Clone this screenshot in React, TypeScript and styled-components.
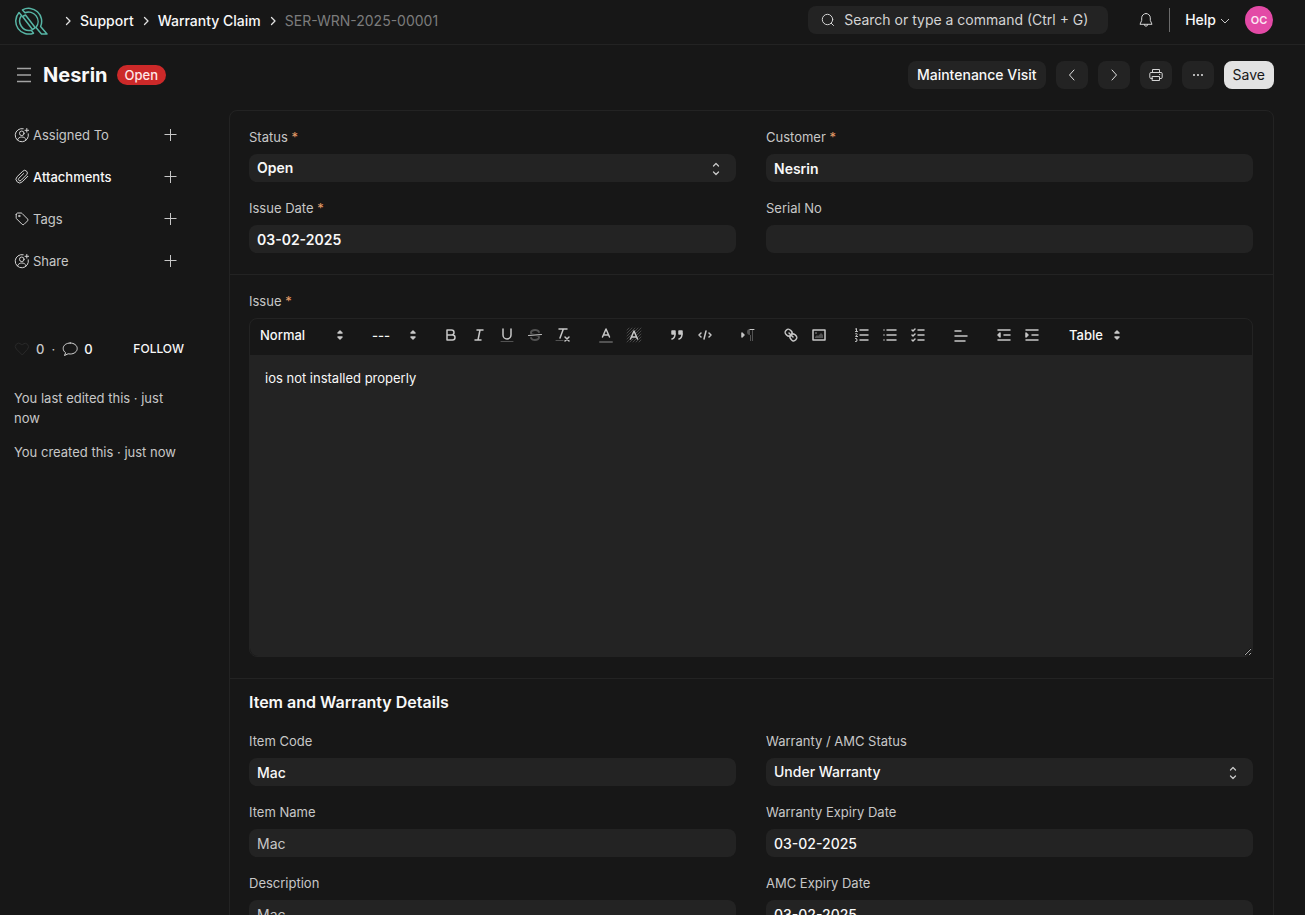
import React from "react";
import styled, { createGlobalStyle } from "styled-components";

const GlobalStyle = createGlobalStyle`
  *, *::before, *::after { box-sizing: border-box; }
  html { color-scheme: dark; }
  body {
    margin: 0;
    background: #171717;
    color: #f8f8f8;
    font-family: Inter, "Liberation Sans", sans-serif;
    font-size: 13px;
    line-height: 20px;
  }
  button, input, select, textarea { font: inherit; color: inherit; margin: 0; }
  a { color: inherit; text-decoration: none; }
  svg { display: block; flex: none; }
`;

const Page = styled.div`
  height: 100vh;
  overflow: hidden;
`;

const Navbar = styled.header`
  display: flex;
  align-items: center;
  justify-content: space-between;
  height: 45px;
  padding: 0 32px 4px 14px;
  border-bottom: 1px solid #232323;
`;

const Breadcrumbs = styled.nav`
  display: flex;
  align-items: center;
  gap: 7px;
  padding-top: 2px;
  font-size: 14px;
  font-weight: 500;
`;

const Crumb = styled.a<{ $muted?: boolean }>`
  color: ${(p) => (p.$muted ? "#7c7c7c" : "#f8f8f8")};
  font-weight: ${(p) => (p.$muted ? 400 : 500)};
`;

const LogoLink = styled.a`
  display: block;
  margin-right: 8px;
`;

const NavTools = styled.div`
  display: flex;
  align-items: center;
`;

const SearchBox = styled.label`
  display: flex;
  align-items: center;
  gap: 8px;
  width: 300px;
  height: 28px;
  padding: 0 12px;
  border-radius: 8px;
  background: #232323;
`;

const SearchInput = styled.input`
  flex: 1;
  min-width: 0;
  padding: 0;
  border: 0;
  outline: 0;
  background: none;
  font-size: 14px;
  &::placeholder { color: #d4d4d4; opacity: 1; }
`;

const BareButton = styled.button`
  display: flex;
  align-items: center;
  padding: 0;
  border: 0;
  background: none;
  cursor: pointer;
`;

const BellButton = styled(BareButton)`
  margin: 0 15px 0 30px;
`;

const NavDivider = styled.span`
  width: 1px;
  height: 24px;
  background: #6b6b6b;
`;

const HelpButton = styled(BareButton)`
  gap: 3px;
  margin: 0 14px 0 15px;
  font-size: 14px;
  font-weight: 500;
`;

const Avatar = styled(BareButton)`
  justify-content: center;
  width: 28px;
  height: 28px;
  border-radius: 50%;
  background: #e34aa6;
  color: #fce7f3;
  font-size: 11px;
  font-weight: 600;
`;

const PageHead = styled.div`
  display: flex;
  align-items: center;
  justify-content: space-between;
  height: 60px;
  padding: 0 31px 0 14px;
`;

const TitleArea = styled.div`
  display: flex;
  align-items: center;
`;

const Title = styled.h1`
  margin: 0 9px;
  font-size: 20px;
  font-weight: 700;
  line-height: 28px;
`;

const Pill = styled.span`
  padding: 0 8px;
  border-radius: 10px;
  background: #cc2929;
  color: #ffe7e7;
  font-weight: 500;
`;

const Actions = styled.div`
  display: flex;
  gap: 10px;
`;

const ActionButton = styled.button<{ $kind?: "icon" | "primary" }>`
  display: flex;
  align-items: center;
  justify-content: center;
  height: 28px;
  width: ${(p) => (p.$kind === "icon" ? "32px" : "auto")};
  padding: 0 ${(p) => (p.$kind === "icon" ? 0 : 9)}px;
  border: 0;
  border-radius: 8px;
  background: ${(p) => (p.$kind === "primary" ? "#e2e2e2" : "#232323")};
  color: ${(p) => (p.$kind === "primary" ? "#171717" : "#f8f8f8")};
  font-size: 14px;
  font-weight: ${(p) => (p.$kind === "primary" ? 400 : 500)};
  cursor: pointer;
`;

const Body = styled.div`
  display: flex;
  align-items: flex-start;
  gap: 45px;
  padding: 5px 31px 0 14px;
`;

const Sidebar = styled.aside`
  flex: none;
  width: 170px;
  padding-top: 15px;
  color: #c7c7c7;
`;

const SideList = styled.ul`
  display: flex;
  flex-direction: column;
  gap: 22px;
  margin: 0 0 68px;
  padding: 0;
  list-style: none;
`;

const SideItem = styled.li<{ $active?: boolean }>`
  display: flex;
  align-items: center;
  gap: 3px;
  color: ${(p) => (p.$active ? "#f8f8f8" : "#c7c7c7")};
  font-weight: ${(p) => (p.$active ? 500 : 400)};
`;

const AddButton = styled(BareButton)`
  margin: 0 6px 0 auto;
`;

const Stats = styled.div`
  display: flex;
  align-items: center;
  gap: 7px;
  margin-bottom: 29px;
`;

const Stat = styled(BareButton)<{ $active?: boolean }>`
  gap: 6px;
  color: ${(p) => (p.$active ? "#f8f8f8" : "#c7c7c7")};
  font-weight: 500;
`;

const FollowButton = styled(BareButton)`
  margin-left: auto;
  font-size: 12px;
  font-weight: 500;
  color: #f8f8f8;
`;

const Note = styled.p`
  margin: 0 0 14px;
`;

const Card = styled.main`
  flex: 1;
  min-width: 0;
  border: 1px solid #232323;
  border-radius: 8px;
`;

const Section = styled.section`
  padding: 16px 20px 21px 19px;
  & + & { border-top: 1px solid #232323; }
`;

const SectionTitle = styled.h2`
  margin: -5px 0 17px;
  font-size: 16px;
  font-weight: 600;
  line-height: 24px;
`;

const FieldGrid = styled.div`
  display: grid;
  grid-template-columns: 1fr 1fr;
  gap: 16px 30px;
`;

const FieldBox = styled.div`
  display: flex;
  flex-direction: column;
  gap: 7px;
`;

const FieldLabel = styled.label`
  color: #c7c7c7;
`;

const Star = styled.span`
  color: #e79b67;
`;

const controlWeight = { bold: 600, medium: 500, normal: 400 };

const Control = styled.input<{ $tone: keyof typeof controlWeight }>`
  width: 100%;
  height: 28px;
  padding: 0 8px;
  border: 0;
  border-radius: 8px;
  outline: 0;
  appearance: none;
  background: #232323;
  color: ${(p) => (p.$tone === "normal" ? "#c7c7c7" : "#f8f8f8")};
  font-size: 14px;
  font-weight: ${(p) => controlWeight[p.$tone]};
`;

const SelectWrap = styled.div`
  position: relative;
`;

const SelectMark = styled.svg`
  position: absolute;
  top: 8px;
  right: 16px;
  pointer-events: none;
`;

const Editor = styled.div`
  margin-top: 7px;
  border: 1px solid #232323;
  border-radius: 8px;
`;

const Toolbar = styled.div`
  display: flex;
  align-items: center;
  gap: 15px;
  height: 36px;
  padding: 0 0 4px 2px;
  overflow: hidden;
`;

const ToolGroup = styled.div`
  display: flex;
`;

const Tool = styled(BareButton)`
  justify-content: center;
  width: 28px;
  height: 24px;
`;

const Picker = styled.div<{ $w: number }>`
  position: relative;
  width: ${(p) => p.$w}px;
`;

const PickerSelect = styled.select`
  width: 100%;
  height: 24px;
  padding: 0 0 0 8px;
  border: 0;
  outline: 0;
  appearance: none;
  background: none;
  font-weight: 500;
`;

const PickerMark = styled.svg`
  position: absolute;
  top: 3px;
  right: 0;
  pointer-events: none;
`;

const EditorText = styled.textarea`
  display: block;
  width: 100%;
  height: 301px;
  padding: 13px 15px;
  border: 0;
  border-radius: 0 0 8px 8px;
  outline: 0;
  resize: vertical;
  background: #232323;
`;

const CrumbArrow = () => (
  <svg width="10" height="12" viewBox="0 0 10 12" fill="none" stroke="#e2e2e2" strokeWidth="1.3">
    <path d="M3.5 2.5 7 6 3.5 9.5" strokeLinecap="round" strokeLinejoin="round" />
  </svg>
);

const Logo = () => (
  <svg width="34" height="28" viewBox="0 0 34 28" fill="none" stroke="#57b5a5" strokeWidth="1.5" strokeLinejoin="round">
    <path d="M5 5.500A13 13 0 0 0 19.500 26.200L17.300 23.300A9.500 9.500 0 0 1 7.500 8.500Z" />
    <path d="M8.500 2.900A13 13 0 0 1 26.600 19.500L33 27H27.500L22 20.500A9.500 9.500 0 0 0 11 5.800Z" />
    <path d="M8.500 9.500 18.500 22.500 21.300 20.700 11.500 8Z" />
  </svg>
);

const StrokeIcon = ({ size = 16, color = "#d4d4d4", children }: { size?: number; color?: string; children: React.ReactNode }) => (
  <svg width={size} height={size} viewBox="0 0 16 16" fill="none" stroke={color} strokeLinecap="round" strokeLinejoin="round">
    {children}
  </svg>
);

const AssignIcon = () => (
  <StrokeIcon>
    <path d="M9.200 1.700A6.600 6.600 0 1 0 14.300 6.800" />
    <circle cx="7.800" cy="6.300" r="2.300" />
    <path d="M3.500 12.800c.6-1.900 2.300-2.800 4.300-2.800s3.700.9 4.300 2.800M12.800 1.500v3.600M11 3.300h3.600" />
  </StrokeIcon>
);

const ClipIcon = () => (
  <StrokeIcon>
    <path d="M13.800 7.300 8.300 12.800a3.600 3.600 0 0 1-5.200-5.100l5.700-5.500a2.600 2.600 0 0 1 3.800 3.600L7 11.400a1.500 1.500 0 0 1-2.200-2.100l4.800-4.700" />
  </StrokeIcon>
);

const TagIcon = () => (
  <StrokeIcon>
    <path d="M2.200 3.600v3.200c0 .4.1.7.4 1l5.600 5.600c.5.500 1.300.5 1.800 0l3.600-3.600c.5-.5.5-1.300 0-1.800L8 2.400c-.3-.3-.6-.4-1-.4H3.800c-.9 0-1.600.7-1.600 1.600Z" />
    <circle cx="5.200" cy="5" r=".7" />
  </StrokeIcon>
);

const PlusIcon = () => (
  <StrokeIcon color="#c7c7c7">
    <path d="M8.500 2v12M2.500 7.500h12" strokeLinecap="butt" />
  </StrokeIcon>
);

const sideItems = [
  { label: "Assigned To", icon: <AssignIcon /> },
  { label: "Attachments", icon: <ClipIcon />, active: true },
  { label: "Tags", icon: <TagIcon /> },
  { label: "Share", icon: <AssignIcon /> },
];

const UpDown = () => (
  <SelectMark width="8" height="14" viewBox="0 0 8 14" fill="none" stroke="#c7c7c7" strokeWidth="1.3" strokeLinecap="round" strokeLinejoin="round">
    <path d="M1.500 4 4 1.500 6.500 4M1.500 10 4 12.500 6.500 10" />
  </SelectMark>
);

type FieldProps = { id: string; label: string; value?: string; required?: boolean; select?: boolean; tone?: "bold" | "medium" | "normal" };

const Field = ({ id, label, value = "", required, select, tone = "medium" }: FieldProps) => (
  <FieldBox>
    <FieldLabel htmlFor={id}>
      {label}
      {required && <Star> *</Star>}
    </FieldLabel>
    {select ? (
      <SelectWrap>
        <Control as="select" id={id} $tone={tone} defaultValue={value}>
          <option>{value}</option>
        </Control>
        <UpDown />
      </SelectWrap>
    ) : (
      <Control id={id} $tone={tone} defaultValue={value} readOnly={tone === "normal"} />
    )}
  </FieldBox>
);

const ToolPicker = ({ label, text, width }: { label: string; text: string; width: number }) => (
  <Picker $w={width}>
    <PickerSelect aria-label={label} defaultValue={text}>
      <option>{text}</option>
    </PickerSelect>
    <PickerMark width="18" height="18" viewBox="0 0 18 18" fill="#c7c7c7" stroke="#c7c7c7" strokeWidth="1.5" strokeLinejoin="round">
      <path d="M7 11 9 13 11 11ZM7 7 9 5 11 7Z" />
    </PickerMark>
  </Picker>
);

const DIM = "#525252";

const toolGroups: { name: string; art: React.ReactNode }[][] = [
  [
    { name: "Bold", art: <path d="M5 4H9.500A2.500 2.500 0 0 1 9.500 9H5ZM5 9H10.500A2.500 2.500 0 0 1 10.500 14H5Z" /> },
    { name: "Italic", art: <path d="M7 4H13M5 14H11M8 14 10 4" /> },
    { name: "Underline", art: <><path d="M5 3V9a4 4 0 0 0 8 0V3" /><path d="M3 15.500H15" stroke={DIM} strokeWidth="1" /></> },
    {
      name: "Strike",
      art: (
        <>
          <path fill={DIM} stroke="none" d="M9.007,8C6.542,7.791,6,7.519,6,6.500,6,5.792,7.283,5,9,5c1.571,0,2.765.679,2.969,1.309a1,1,0,0,0,1.900-.617C13.356,4.106,11.354,3,9,3,6.200,3,4,4.538,4,6.500a3.200,3.200,0,0,0,.5,1.843Z" />
          <path fill={DIM} stroke="none" d="M8.984,10C11.457,10.208,12,10.479,12,11.500c0,0.708-1.283,1.500-3,1.500-1.571,0-2.765-.679-2.969-1.309a1,1,0,1,0-1.900.617C4.644,13.894,6.646,15,9,15c2.800,0,5-1.538,5-3.500a3.200,3.200,0,0,0-.5-1.843Z" />
          <path d="M15.500 8.500 2.500 9.500" strokeWidth="1" />
        </>
      ),
    },
    { name: "Clear formatting", art: <><path d="M5 3H13M6 12 9.350 3M11 11 15 15M15 11 11 15" /><path d="M2 14.500H9" stroke={DIM} strokeWidth="1" /></> },
  ],
  [
    { name: "Text colour", art: <><path d="M3 16H15" stroke={DIM} strokeWidth="2" /><path d="M5.500 11 9 3 12.500 11M11.600 9H6.400" /></> },
    {
      name: "Highlight",
      art: (
        <>
          <path d="M2 4 4 2M2 7 7 2M2 10 10 2M2 13 5.500 9.500M8 7 13 2M2 16 6 12M11 7 16 2M5 16 8 13M12 9 16 5M8 16 16 8M11 16 16 11M14 16 16 14" stroke={DIM} strokeWidth="0.8" />
          <path d="M5.500 13 9 5 12.500 13M11.600 11H6.400" />
        </>
      ),
    },
  ],
  [
    { name: "Quote", art: <><path fill="#c7c7c7" d="M4 5h3v3H4ZM11 5h3v3h-3Z" /><path d="M7 8c0 4-3 5-3 5M14 8c0 4-3 5-3 5" /></> },
    { name: "Code", art: <path d="M5 7 3 9 5 11M13 7 15 9 13 11M10 5 8 13" /> },
  ],
  [
    {
      name: "Text direction",
      art: (
        <>
          <path d="M11 3a3 3 0 0 0 0 6h1V3ZM11 4h1v11h-1ZM13 4h1v11h-1Z" fill={DIM} stroke="none" />
          <path d="M11 3.500H15" strokeWidth="1" />
          <path d="M3 11 5 9 3 7Z" fill="#c7c7c7" />
        </>
      ),
    },
  ],
  [
    {
      name: "Link",
      art: (
        <path d="M7 7 11 11M8.900,4.577a3.476,3.476,0,0,1,.36,4.679A3.476,3.476,0,0,1,4.577,8.900C3.185,7.500,2.035,6.400,4.217,4.217S7.500,3.185,8.900,4.577ZM13.423,9.100a3.476,3.476,0,0,0-4.679-.36,3.476,3.476,0,0,0,.36,4.679c1.392,1.392,2.500,2.542,4.679.36S14.815,10.500,13.423,9.100Z" />
      ),
    },
    { name: "Image", art: <><path d="M3 4H15V14H3Z" /><path fill={DIM} stroke="none" d="M5 6h2v2H5ZM5 12v-1l2-2 1 1 3-3 2 2v3Z" /></> },
  ],
  [
    {
      name: "Numbered list",
      art: (
        <>
          <path d="M7 4H15M7 9H15M7 14H15" />
          <path strokeWidth="1" d="M2.500 5.500h2M3.500 5.500v-3l-1 .5M2.500 7.700c1-.6 2 0 1.600.8L2.600 10.500h2M2.500 12.500c2-.3 2 1.400.7 1.500 1.500.1 1.400 1.900-.7 1.500" />
        </>
      ),
    },
    { name: "Bullet list", art: <path d="M6 4H15M6 9H15M6 14H15M3 4h.01M3 9h.01M3 14h.01" /> },
    { name: "Check list", art: <path d="M9 4H15M9 9H15M9 14H15M3 4 4 5 6 3M3 9 4 10 6 8M3 14 4 15 6 13" /> },
  ],
  [{ name: "Align", art: <path d="M3 5H9M3 10H15M3 15H13" /> }],
  [
    { name: "Outdent", art: <><path d="M3 4H15M9 9H15M3 14H15" /><path fill="#c7c7c7" d="M5 7V11L3 9Z" /></> },
    { name: "Indent", art: <><path d="M3 4H15M9 9H15M3 14H15" /><path fill="#c7c7c7" d="M3 7V11L5 9Z" /></> },
  ],
];

export default function App() {
  return (
    <>
      <GlobalStyle />
      <Page>
        <Navbar>
          <Breadcrumbs aria-label="Breadcrumb">
            <LogoLink href="#" aria-label="Home"><Logo /></LogoLink>
            <CrumbArrow />
            <Crumb href="#">Support</Crumb>
            <CrumbArrow />
            <Crumb href="#">Warranty Claim</Crumb>
            <CrumbArrow />
            <Crumb href="#" $muted>SER-WRN-2025-00001</Crumb>
          </Breadcrumbs>
          <NavTools>
            <SearchBox>
              <StrokeIcon>
                <circle cx="7.500" cy="7.500" r="5.200" />
                <path d="M11.300 11.300 13.500 13.500" />
              </StrokeIcon>
              <SearchInput type="text" aria-label="Search" placeholder="Search or type a command (Ctrl + G)" />
            </SearchBox>
            <BellButton aria-label="Notifications">
              <StrokeIcon>
                <path d="M8 1.500a4.300 4.300 0 0 0-4.300 4.300v2.600L2 12.300h12L12.300 8.400V5.800A4.300 4.300 0 0 0 8 1.500ZM6.300 12.500a1.700 1.700 0 0 0 3.400 0" />
              </StrokeIcon>
            </BellButton>
            <NavDivider />
            <HelpButton>
              Help
              <svg width="12" height="12" viewBox="0 0 12 12" fill="none" stroke="#c7c7c7">
                <path d="M2 5 6 9 10 5" />
              </svg>
            </HelpButton>
            <Avatar aria-label="Account">OC</Avatar>
          </NavTools>
        </Navbar>

        <PageHead>
          <TitleArea>
            <BareButton aria-label="Toggle sidebar">
              <svg width="20" height="20" viewBox="0 0 20 20" stroke="#a3a3a3" strokeWidth="1.5">
                <path d="M3 3.500H17M3 10H17M3 16.500H17" />
              </svg>
            </BareButton>
            <Title>Nesrin</Title>
            <Pill>Open</Pill>
          </TitleArea>
          <Actions>
            <ActionButton>Maintenance Visit</ActionButton>
            <ActionButton $kind="icon" aria-label="Previous">
              <StrokeIcon color="#e2e2e2"><path d="M10 3 5.500 8 10 13" /></StrokeIcon>
            </ActionButton>
            <ActionButton $kind="icon" aria-label="Next">
              <StrokeIcon color="#e2e2e2"><path d="M6 3 10.500 8 6 13" /></StrokeIcon>
            </ActionButton>
            <ActionButton $kind="icon" aria-label="Print">
              <StrokeIcon>
                <path d="M4.500 5.500V2.500h7v3M4.500 11.500h-1.500a1.200 1.200 0 0 1-1.200-1.200V6.700A1.200 1.200 0 0 1 3 5.500h10a1.200 1.200 0 0 1 1.200 1.200v3.600a1.200 1.200 0 0 1-1.200 1.200h-1.500M4.500 9.500h7v4h-7ZM11.500 7.500h.3" />
              </StrokeIcon>
            </ActionButton>
            <ActionButton $kind="icon" aria-label="Menu">
              <StrokeIcon color="#f8f8f8"><path strokeWidth="1.8" d="M4 8h.01M8 8h.01M12 8h.01" /></StrokeIcon>
            </ActionButton>
            <ActionButton $kind="primary">Save</ActionButton>
          </Actions>
        </PageHead>

        <Body>
          <Sidebar>
            <SideList>
              {sideItems.map((item) => (
                <SideItem key={item.label} $active={item.active}>
                  {item.icon}
                  {item.label}
                  <AddButton aria-label={`Add: ${item.label}`}><PlusIcon /></AddButton>
                </SideItem>
              ))}
            </SideList>
            <Stats>
              <Stat aria-label="Likes">
                <StrokeIcon color="#292929">
                  <path d="M8 13.700 2.300 8a3.500 3.500 0 0 1 0-4.800 3.400 3.400 0 0 1 4.800 0l.9.9.9-.9a3.400 3.400 0 0 1 4.800 4.800Z" />
                </StrokeIcon>
                0
              </Stat>
              ·
              <Stat aria-label="Comments" $active>
                <StrokeIcon>
                  <path d="M8.200 2c-4 0-7 2.300-7 5.400 0 1.900.9 3.300 2.400 4.300L2.500 14.500l3.600-1.700c.7.100 1.300.2 2.100.2 4 0 7-2.400 7-5.500S12.200 2 8.200 2Z" />
                </StrokeIcon>
                0
              </Stat>
              <FollowButton>FOLLOW</FollowButton>
            </Stats>
            <Note>You last edited this · just now</Note>
            <Note>You created this · just now</Note>
          </Sidebar>

          <Card>
            <Section>
              <FieldGrid>
                <Field id="status" label="Status" value="Open" required select tone="bold" />
                <Field id="customer" label="Customer" value="Nesrin" required tone="bold" />
                <Field id="issue-date" label="Issue Date" value="03-02-2025" required tone="bold" />
                <Field id="serial-no" label="Serial No" />
              </FieldGrid>
            </Section>
            <Section>
              <FieldLabel htmlFor="issue">Issue<Star> *</Star></FieldLabel>
              <Editor>
                <Toolbar>
                  <ToolPicker label="Heading" text="Normal" width={97} />
                  <ToolPicker label="Size" text="---" width={58} />
                  {toolGroups.map((group) => (
                    <ToolGroup key={group[0].name}>
                      {group.map((tool) => (
                        <Tool key={tool.name} aria-label={tool.name}>
                          <svg width="18" height="18" viewBox="0 0 18 18" fill="none" stroke="#c7c7c7" strokeWidth="1.5" strokeLinecap="round" strokeLinejoin="round">
                            {tool.art}
                          </svg>
                        </Tool>
                      ))}
                    </ToolGroup>
                  ))}
                  <ToolPicker label="Table" text="Table" width={65} />
                </Toolbar>
                <EditorText id="issue" defaultValue="ios not installed properly" />
              </Editor>
            </Section>
            <Section>
              <SectionTitle>Item and Warranty Details</SectionTitle>
              <FieldGrid>
                <Field id="item-code" label="Item Code" value="Mac" />
                <Field id="amc-status" label="Warranty / AMC Status" value="Under Warranty" select />
                <Field id="item-name" label="Item Name" value="Mac" tone="normal" />
                <Field id="warranty-expiry" label="Warranty Expiry Date" value="03-02-2025" />
                <Field id="description" label="Description" value="Mac" tone="normal" />
                <Field id="amc-expiry" label="AMC Expiry Date" value="03-02-2025" />
              </FieldGrid>
            </Section>
          </Card>
        </Body>
      </Page>
    </>
  );
}
